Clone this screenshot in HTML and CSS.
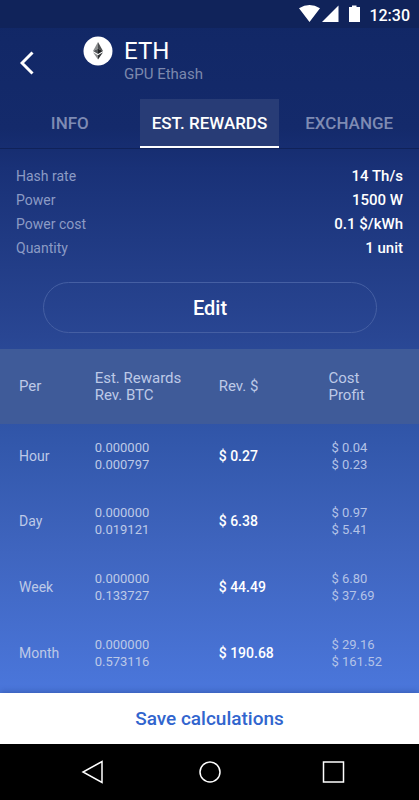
FILE: index.html
```html
<!DOCTYPE html>
<html lang="en">
<head>
<meta charset="utf-8">
<meta name="viewport" content="width=device-width, initial-scale=1">
<title>ETH – Est. Rewards</title>
<link rel="stylesheet" href="styles.css">
</head>
<body>
<div class="screen">
  <div class="status">
    <svg class="status-icons" width="62" height="18" viewBox="0 0 62 18" aria-hidden="true">
      <path d="M0 3.2Q10.500 -3 21 3.2L10.500 17Z M23 17L39.500 .5V17Z M50 2H53V.5H57.500V2H61V17H50Z"/>
    </svg>
    <span>12:30</span>
  </div>

  <header class="header">
    <button class="back" type="button" aria-label="Back">
      <svg width="14" height="24" viewBox="0 0 14 24" aria-hidden="true"><path d="M12.500 1.500L2 12L12.500 22.500"/></svg>
    </button>
    <svg class="coin" width="30" height="30" viewBox="0 0 30 30" aria-hidden="true">
      <circle cx="15" cy="15" r="14.500" fill="#fff"/>
      <path d="M15 6L10 15L15 12.700Z" fill="#8b8d8e"/>
      <path d="M15 6L20 15L15 12.700Z" fill="#4c4e50"/>
      <path d="M10 15L15 12.700V18Z" fill="#55585a"/>
      <path d="M20 15L15 12.700V18Z" fill="#222426"/>
      <path d="M10 16.300L15 19.300V23.500Z" fill="#8b8d8e"/>
      <path d="M20 16.300L15 19.300V23.500Z" fill="#303234"/>
    </svg>
    <div>
      <h1 class="title">ETH</h1>
      <p class="subtitle">GPU Ethash</p>
    </div>
  </header>

  <nav class="tabs">
    <a class="tab" href="#info">INFO</a>
    <a class="tab active" href="#rewards" aria-current="page">EST. REWARDS</a>
    <a class="tab" href="#exchange">EXCHANGE</a>
  </nav>

  <main class="content">
    <dl class="details">
      <div class="detail"><dt>Hash rate</dt><dd>14 Th/s</dd></div>
      <div class="detail"><dt>Power</dt><dd>1500 W</dd></div>
      <div class="detail"><dt>Power cost</dt><dd>0.1 $/kWh</dd></div>
      <div class="detail"><dt>Quantity</dt><dd>1 unit</dd></div>
    </dl>
    <button class="edit" type="button">Edit</button>

    <table class="rewards">
      <colgroup><col class="col-per"><col class="col-btc"><col class="col-rev"><col></colgroup>
      <thead>
        <tr><th scope="col">Per</th><th scope="col">Est. Rewards<br>Rev. BTC</th><th scope="col">Rev. $</th><th scope="col">Cost<br>Profit</th></tr>
      </thead>
      <tbody>
        <tr><th scope="row">Hour</th><td>0.000000<br>0.000797</td><td class="rev">$ 0.27</td><td class="cost">$ 0.04<br>$ 0.23</td></tr>
        <tr><th scope="row">Day</th><td>0.000000<br>0.019121</td><td class="rev">$ 6.38</td><td class="cost">$ 0.97<br>$ 5.41</td></tr>
        <tr><th scope="row">Week</th><td>0.000000<br>0.133727</td><td class="rev">$ 44.49</td><td class="cost">$ 6.80<br>$ 37.69</td></tr>
        <tr><th scope="row">Month</th><td>0.000000<br>0.573116</td><td class="rev">$ 190.68</td><td class="cost">$ 29.16<br>$ 161.52</td></tr>
      </tbody>
    </table>
  </main>

  <button class="save" type="button">Save calculations</button>

  <div class="navbar">
    <button type="button" aria-label="Back"><svg width="36" height="24" viewBox="0 0 36 24"><path d="M34 1.500V22.500L15 12Z"/></svg></button>
    <button type="button" aria-label="Home"><svg width="36" height="24" viewBox="0 0 36 24"><circle cx="18" cy="12" r="10"/></svg></button>
    <button type="button" aria-label="Recents"><svg width="36" height="24" viewBox="0 0 36 24"><rect x="7.500" y="2" width="20" height="20"/></svg></button>
  </div>
</div>
</body>
</html>
```
FILE: styles.css
```css
* { box-sizing: border-box; }

body {
  margin: 0;
  font-family: Roboto, "Noto Sans", sans-serif;
  color: #fff;
}

button {
  margin: 0;
  padding: 0;
  border: 0;
  background: none;
  color: inherit;
  font: inherit;
  cursor: pointer;
}

.screen {
  display: flex;
  flex-direction: column;
  min-height: 100vh;
  background: linear-gradient(#112765 0%, #142a6b 16%, #193177 21%, #294693 42%, #3156a9 54%, #3f65bf 69%, #4b77dc 87%);
}

.status {
  display: flex;
  align-items: flex-start;
  justify-content: flex-end;
  gap: 8px;
  height: 28px;
  padding: 5px 9px 0 0;
  background: #10235a;
  font-size: 16px;
  font-weight: 500;
  line-height: 22px;
}

.status-icons { fill: #fff; }

.header {
  display: flex;
  height: 71px;
  padding: 8px 16px 0 20px;
}

.back {
  display: flex;
  align-self: flex-start;
  margin: 15px 49px 0 0;
}

.back path {
  fill: none;
  stroke: #fff;
  stroke-width: 3;
}

.coin { margin-right: 11px; }

.title {
  margin: 0;
  font-size: 24px;
  font-weight: 400;
  line-height: 30px;
}

.subtitle {
  margin: 0;
  color: #7c88ad;
  font-size: 15px;
  line-height: 16px;
}

.tabs {
  display: grid;
  grid-template-columns: repeat(3, 1fr);
  height: 50px;
  border-bottom: 1px solid #102259;
}

.tab {
  display: flex;
  align-items: center;
  justify-content: center;
  border-bottom: 2px solid transparent;
  color: #7e8bb3;
  font-size: 17px;
  font-weight: 500;
  line-height: 20px;
  text-decoration: none;
}

.tab.active {
  border-color: #fff;
  background: #283c76;
  color: #fff;
}

.content {
  display: flex;
  flex: 1;
  flex-direction: column;
}

.details {
  margin: 0;
  padding: 15px 16px 0;
  font-size: 15px;
  line-height: 24px;
}

.detail {
  display: flex;
  justify-content: space-between;
}

.detail dt { color: #8c9bc5; font-size: 14px; }

.detail dd { margin: 0; font-weight: 500; }

.edit {
  height: 51px;
  margin: 22px 42px 16px 43px;
  border: 1px solid #455fa3;
  border-radius: 26px;
  font-size: 20px;
  font-weight: 500;
}

.rewards {
  width: 100%;
  border-collapse: collapse;
  table-layout: fixed;
  color: #bdc9e7;
  font-size: 13px;
  line-height: 17px;
  text-align: left;
}

.col-per { width: 22.6%; }
.col-btc { width: 29.6%; }
.col-rev { width: 26.2%; }

.rewards th,
.rewards td { padding: 0; }

.rewards th { font-size: 14px; font-weight: 400; }

.rewards thead th { font-size: 15px; }

.rewards th:first-child { padding-left: 19px; }

.rewards thead { background: #3f5b99; }

.rewards thead tr { height: 75px; }

.rewards tbody tr { height: 66px; }

.rewards tbody tr:first-child { height: 64px; }

.rewards .rev { color: #fff; font-size: 14px; font-weight: 500; }

.rewards .cost { padding-left: 3px; color: #b4c3e7; }

.save {
  height: 51px;
  background: #fff;
  box-shadow: 0 -1px 6px rgba(20, 40, 100, 0.35);
  color: #3165ce;
  font-size: 19px;
  font-weight: 500;
}

.navbar {
  display: flex;
  align-items: center;
  justify-content: center;
  gap: 88px;
  height: 56px;
  background: #000;
}

.navbar button { display: flex; }

.navbar svg {
  fill: none;
  stroke: #fff;
  stroke-width: 1.5;
}
```
